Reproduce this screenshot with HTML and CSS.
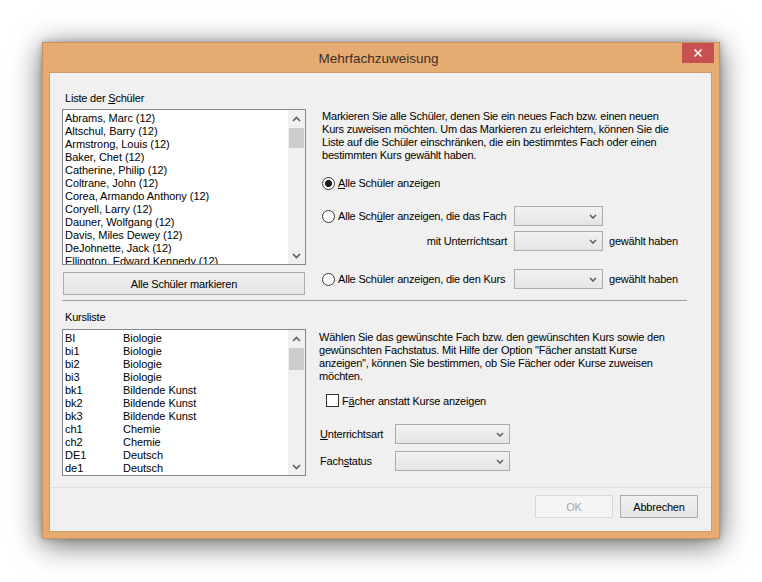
FILE: index.html
```html
<!DOCTYPE html>
<html lang="de">
<head>
<meta charset="utf-8">
<title>Mehrfachzuweisung</title>
<link rel="stylesheet" href="styles.css">
</head>
<body>
<div class="desk">
  <div class="window">
    <div class="titlebar">
      <div></div>
      <div class="title">Mehrfachzuweisung</div>
      <div class="close-wrap">
        <div class="close"><svg width="10" height="10" viewBox="0 0 10 10"><path d="M1.5 1.5 L8.5 8.5 M8.5 1.5 L1.5 8.5" stroke="#fff" stroke-width="1.5" fill="none"/></svg></div>
      </div>
    </div>
    <div class="client">
      <div class="main">
        <div class="section upper">
          <div class="leftcol">
            <div class="label">Liste der <u>S</u>chüler</div>
            <div class="listbox students">
              <div class="items">
                <div class="row">Abrams, Marc (12)</div>
                <div class="row">Altschul, Barry (12)</div>
                <div class="row">Armstrong, Louis (12)</div>
                <div class="row">Baker, Chet (12)</div>
                <div class="row">Catherine, Philip (12)</div>
                <div class="row">Coltrane, John (12)</div>
                <div class="row">Corea, Armando Anthony (12)</div>
                <div class="row">Coryell, Larry (12)</div>
                <div class="row">Dauner, Wolfgang (12)</div>
                <div class="row">Davis, Miles Dewey (12)</div>
                <div class="row">DeJohnette, Jack (12)</div>
                <div class="row">Ellington, Edward Kennedy (12)</div>
              </div>
              <div class="scrollbar">
                <div class="arrow"><svg width="9" height="6" viewBox="0 0 9 6"><path d="M1 5 L4.5 1.5 L8 5" stroke="#606060" stroke-width="1.7" fill="none"/></svg></div>
                <div class="thumb thumb-a"></div>
                <div class="track"></div>
                <div class="arrow"><svg width="9" height="6" viewBox="0 0 9 6"><path d="M1 1 L4.5 4.5 L8 1" stroke="#606060" stroke-width="1.7" fill="none"/></svg></div>
              </div>
            </div>
            <div class="button wide">Alle Schüler markieren</div>
          </div>
          <div class="rightcol top-right">
            <p class="info">Markieren Sie alle Schüler, denen Sie ein neues Fach bzw. einen neuen<br>Kurs zuweisen möchten. Um das Markieren zu erleichtern, können Sie die<br>Liste auf die Schüler einschränken, die ein bestimmtes Fach oder einen<br>bestimmten Kurs gewählt haben.</p>
            <div class="opt opt1">
              <div class="radio-label"><span class="radio checked"></span><span><u>A</u>lle Schüler anzeigen</span></div>
            </div>
            <div class="opt opt2">
              <div class="radio-label"><span class="radio"></span><span>Alle Sch<u>ü</u>ler anzeigen, die das Fach</span></div>
              <div class="combo"><svg width="8" height="5" viewBox="0 0 8 5"><path d="M1 1 L4 4 L7 1" stroke="#606060" stroke-width="1.6" fill="none"/></svg></div>
              <div></div>
            </div>
            <div class="opt opt3">
              <div class="right-label">mit Unterrichtsart</div>
              <div class="combo"><svg width="8" height="5" viewBox="0 0 8 5"><path d="M1 1 L4 4 L7 1" stroke="#606060" stroke-width="1.6" fill="none"/></svg></div>
              <div class="after">gewählt haben</div>
            </div>
            <div class="opt opt4">
              <div class="radio-label"><span class="radio"></span><span>Alle Schüler anzeigen, die den Kurs</span></div>
              <div class="combo"><svg width="8" height="5" viewBox="0 0 8 5"><path d="M1 1 L4 4 L7 1" stroke="#606060" stroke-width="1.6" fill="none"/></svg></div>
              <div class="after">gewählt haben</div>
            </div>
          </div>
        </div>
        <div class="separator"></div>
        <div class="section lower">
          <div class="leftcol">
            <div class="label">Kursliste</div>
            <div class="listbox courses">
              <div class="items">
                <div class="row"><span class="code">BI</span><span>Biologie</span></div>
                <div class="row"><span class="code">bi1</span><span>Biologie</span></div>
                <div class="row"><span class="code">bi2</span><span>Biologie</span></div>
                <div class="row"><span class="code">bi3</span><span>Biologie</span></div>
                <div class="row"><span class="code">bk1</span><span>Bildende Kunst</span></div>
                <div class="row"><span class="code">bk2</span><span>Bildende Kunst</span></div>
                <div class="row"><span class="code">bk3</span><span>Bildende Kunst</span></div>
                <div class="row"><span class="code">ch1</span><span>Chemie</span></div>
                <div class="row"><span class="code">ch2</span><span>Chemie</span></div>
                <div class="row"><span class="code">DE1</span><span>Deutsch</span></div>
                <div class="row"><span class="code">de1</span><span>Deutsch</span></div>
              </div>
              <div class="scrollbar">
                <div class="arrow"><svg width="9" height="6" viewBox="0 0 9 6"><path d="M1 5 L4.5 1.5 L8 5" stroke="#606060" stroke-width="1.7" fill="none"/></svg></div>
                <div class="thumb thumb-b"></div>
                <div class="track"></div>
                <div class="arrow"><svg width="9" height="6" viewBox="0 0 9 6"><path d="M1 1 L4.5 4.5 L8 1" stroke="#606060" stroke-width="1.7" fill="none"/></svg></div>
              </div>
            </div>
          </div>
          <div class="rightcol bottom-right">
            <p class="info">Wählen Sie das gewünschte Fach bzw. den gewünschten Kurs sowie den<br>gewünschten Fachstatus. Mit Hilfe der Option "Fächer anstatt Kurse<br>anzeigen", können Sie bestimmen, ob Sie Fächer oder Kurse zuweisen<br>möchten.</p>
            <div class="check-row"><span class="checkbox"></span><span>F<u>ä</u>cher anstatt Kurse anzeigen</span></div>
            <div class="field field1">
              <span class="field-label"><u>U</u>nterrichtsart</span>
              <div class="combo wide-combo"><svg width="8" height="5" viewBox="0 0 8 5"><path d="M1 1 L4 4 L7 1" stroke="#606060" stroke-width="1.6" fill="none"/></svg></div>
            </div>
            <div class="field field2">
              <span class="field-label">Fach<u>s</u>tatus</span>
              <div class="combo wide-combo"><svg width="8" height="5" viewBox="0 0 8 5"><path d="M1 1 L4 4 L7 1" stroke="#606060" stroke-width="1.6" fill="none"/></svg></div>
            </div>
          </div>
        </div>
      </div>
      <div class="footer">
        <div class="button footer-btn disabled">OK</div>
        <div class="button footer-btn">Abbrechen</div>
      </div>
    </div>
  </div>
</div>
</body>
</html>
```

FILE: styles.css
```css
* { box-sizing: border-box; }

html, body {
  margin: 0;
  padding: 0;
  background: #ffffff;
}

body {
  font-family: "Liberation Sans", Arial, sans-serif;
  font-size: 11px;
  letter-spacing: -0.2px;
  color: #000;
}

u { text-decoration: underline; text-underline-offset: 1px; }

.desk {
  padding: 42px 0 43px 42px;
}

.window {
  width: 678px;
  height: 497px;
  background: #e6ab71;
  border: 1px solid #c99262;
  padding: 0 7px 6px 6px;
  box-shadow: 0 5px 28px rgba(0, 0, 0, 0.6), 0 0 6px rgba(0, 0, 0, 0.25);
  display: flex;
  flex-direction: column;
}

.titlebar {
  height: 29px;
  margin: 0 -7px 0 -6px;
  padding-right: 5px;
  display: grid;
  grid-template-columns: 1fr auto 1fr;
  align-items: start;
}

.title {
  font-size: 13.5px;
  letter-spacing: 0;
  color: #3a3028;
  line-height: 29px;
  padding-top: 1px;
}

.close-wrap {
  display: flex;
  justify-content: flex-end;
}

.close {
  width: 32px;
  height: 20px;
  background: #c75050;
  display: flex;
  align-items: center;
  justify-content: center;
}

.client {
  flex: 1;
  background: #f0f0f0;
  border: 1px solid #d19b66;
  display: flex;
  flex-direction: column;
}

.main {
  flex: 1;
  padding: 18px 24px 0 12px;
}

.section {
  display: flex;
}

.leftcol {
  width: 244px;
  flex: none;
}

.label {
  height: 15px;
  line-height: 15px;
  padding-left: 3px;
  margin-bottom: 3px;
}

.lower .label { margin-bottom: 4px; }

.listbox {
  border: 1px solid #828790;
  background: #fff;
  display: flex;
  overflow: hidden;
}

.students { height: 156px; }
.courses { height: 147px; }

.items {
  flex: 1;
  padding: 2px 0 0 2px;
  overflow: hidden;
  white-space: nowrap;
  letter-spacing: -0.05px;
}

.row {
  height: 13px;
  line-height: 13px;
  display: flex;
}

.code {
  width: 58px;
  flex: none;
}

.scrollbar {
  width: 17px;
  flex: none;
  background: #f0f0f0;
  display: flex;
  flex-direction: column;
}

.arrow {
  height: 17px;
  flex: none;
  display: flex;
  align-items: center;
  justify-content: center;
}

.thumb {
  margin: 1px 1px 0 1px;
  background: #cdcdcd;
  flex: none;
}

.thumb-a { height: 20px; }
.thumb-b { height: 22px; }

.track { flex: 1; }

.button {
  border: 1px solid #acacac;
  background: linear-gradient(#f0f0f0, #e5e5e5);
  display: flex;
  align-items: center;
  justify-content: center;
  height: 23px;
}

.wide {
  width: 242px;
  margin: 7px 0 0 1px;
}

.rightcol { white-space: nowrap; }

.top-right { margin-left: 16px; }
.bottom-right { margin-left: 13px; }

.info {
  margin: 0;
  line-height: 13px;
}

.top-right .info { margin-top: 19px; }
.bottom-right .info { margin-top: 21px; }

.opt {
  display: grid;
  grid-template-columns: 186px 89px auto;
  column-gap: 6px;
  align-items: center;
  height: 20px;
}

.opt1 { margin-top: 11px; }
.opt2 { margin-top: 13px; }
.opt3 { margin-top: 5px; }
.opt4 { margin-top: 18px; }

.radio-label {
  display: flex;
  align-items: center;
  gap: 3px;
}

.radio {
  width: 13px;
  height: 13px;
  border-radius: 50%;
  border: 1px solid #3c3c3c;
  background: radial-gradient(circle, #ffffff 55%, #ececec 100%);
  display: inline-block;
  flex: none;
}

.radio.checked {
  background: radial-gradient(circle, #1a1a1a 0, #1a1a1a 3.2px, #ffffff 3.8px, #f4f4f4 100%);
}

.right-label {
  text-align: right;
  padding-right: 1px;
}

.combo {
  height: 20px;
  border: 1px solid #acacac;
  background: linear-gradient(#f2f2f2, #e5e5e5);
  display: flex;
  align-items: center;
  justify-content: flex-end;
  padding-right: 5px;
}

.check-row {
  margin: 10px 0 0 7px;
  height: 15px;
  display: flex;
  align-items: center;
  gap: 3px;
}

.checkbox {
  width: 13px;
  height: 13px;
  border: 1px solid #333;
  background: #fff;
  flex: none;
}

.field {
  display: flex;
  align-items: center;
  margin-left: 1px;
  height: 20px;
}

.field1 { margin-top: 16px; }
.field2 { margin-top: 7px; }

.field-label { width: 75px; flex: none; }

.wide-combo { width: 115px; }

.separator {
  height: 1px;
  background: #a0a0a0;
  margin-top: 5px;
  margin-bottom: 9px;
}

.footer {
  height: 44px;
  flex: none;
  border-top: 1px solid #dfdfdf;
  display: flex;
  justify-content: flex-end;
  align-items: flex-start;
  gap: 7px;
  padding: 7px 13px 0 0;
}

.footer-btn { width: 78px; }

.disabled {
  border-color: #d9d9d9;
  background: #f4f4f4;
  color: #a6a6a6;
}
```
